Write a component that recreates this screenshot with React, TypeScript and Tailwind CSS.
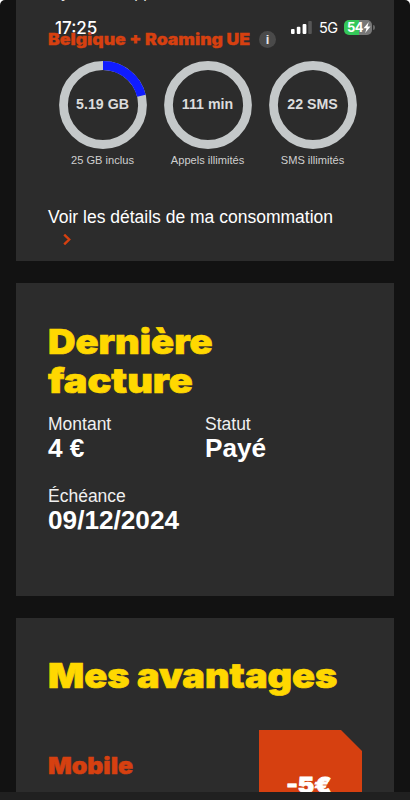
interface IGauge {
	value: string
	label: string
	percent: number
}

const gauges: IGauge[] = [
	{ value: '5.19 GB', label: '25 GB inclus', percent: 21.2 },
	{ value: '111 min', label: 'Appels illimités', percent: 0 },
	{ value: '22 SMS', label: 'SMS illimités', percent: 0 },
]

function Gauge({ value, label, percent }: IGauge) {
	return (
		<div className="flex w-[88px] shrink-0 flex-col items-center">
			<div className="relative flex size-[88px] items-center justify-center">
				<svg className="absolute inset-0 -rotate-90" viewBox="0 0 88 88" fill="none" strokeWidth="8.8">
					<circle cx="44" cy="44" r="39.5" stroke="#c4c8c9" />
					{percent > 0 && (
						<circle
							cx="44"
							cy="44"
							r="39.5"
							stroke="#101cff"
							pathLength="100"
							strokeDasharray={`${percent} 100`}
						/>
					)}
				</svg>
				<span className="relative whitespace-nowrap text-[14.2px] font-bold text-[#dcdcdc]">{value}</span>
			</div>
			<span className="mt-[4px] whitespace-nowrap text-[11.1px] leading-[14px] text-[#cfcfcf]">{label}</span>
		</div>
	)
}

function StatusBar() {
	return (
		<div className="absolute inset-x-0 top-0 h-[44px] text-white">
			<span className="absolute left-[55px] top-[18px] font-['Inter'] text-[17px] leading-[20px] font-medium">
				17:25
			</span>
			<svg className="absolute left-[291px] top-[21px]" width="21" height="13" viewBox="0 0 21 13" fill="#fff">
				<rect x="0" y="8" width="3.6" height="5" rx="1" />
				<rect x="5.8" y="5.8" width="3.6" height="7.2" rx="1" />
				<rect x="11.6" y="3" width="3.8" height="10" rx="1" />
				<rect x="17.2" y="0" width="3.6" height="13" rx="1" fill="#565656" />
			</svg>
			<span className="absolute left-[319px] top-[18px] font-['Inter'] text-[14.5px] leading-[20px] tracking-[-0.5px]">
				5G
			</span>
			<div className="absolute left-[344px] top-[20px] flex h-[15px] w-[28px] items-center overflow-hidden rounded-[5px] bg-[linear-gradient(90deg,#34c759_54%,#777_54%)] pl-[3px]">
				<span className="font-['Inter'] text-[13px] leading-[15px] font-bold tracking-[-0.5px]">54</span>
				<svg width="8" height="11" viewBox="0 0 8 11" fill="#fff">
					<path d="M5.8 0 0.5 6.2h3L2.2 11 7.5 4.6h-3z" />
				</svg>
			</div>
			<div className="absolute left-[373px] top-[25px] h-[5px] w-[1.5px] rounded-r bg-[#666]" />
		</div>
	)
}

function Field({ label, value }: { label: string; value: string }) {
	return (
		<div>
			<p className="text-[17.5px] leading-[22px] text-[#f0f0f0]">{label}</p>
			<p className="pb-[2px] text-[26.2px] leading-[26px] font-bold text-white">{value}</p>
		</div>
	)
}

export default function App() {
	return (
		<div className="h-[800px] w-[410px] bg-white">
			<div className="relative h-[800px] overflow-hidden rounded-t-[5px] bg-[#121212] font-['Liberation_Sans',sans-serif]">
				<StatusBar />
				<main className="flex flex-col gap-[22px] px-[16px]">
					<section className="h-[261px] bg-[#2c2c2c] px-[32px]">
						<p className="-mt-[16px] h-[18px] text-[16px] leading-[18px] whitespace-nowrap text-[#e0e0e0]">
							My Mobile app
						</p>
						<div className="mt-[28px] flex h-[20px] items-center">
							<div className="w-[202px]">
								<h3 className="relative origin-left scale-x-[1.13] whitespace-nowrap font-['Inter'] text-[15.6px] leading-[20px] font-black text-[#d64010] [-webkit-text-stroke:0.3px_#d64010]">
									Belgique + Roaming UE
								</h3>
							</div>
							<span className="-mt-[2px] ml-[9px] flex size-[17px] items-center justify-center rounded-full bg-[#4a4a4a] font-['Liberation_Sans'] text-[13px] leading-[17px] font-bold text-[#e8e8e8]">
								i
							</span>
						</div>
						<div className="mt-[11px] ml-[10.5px] flex gap-[17px]">
							{gauges.map((gauge) => (
								<Gauge key={gauge.label} {...gauge} />
							))}
						</div>
						<p className="mt-[39px] whitespace-nowrap text-[17.5px] leading-[22px] text-white">
							Voir les détails de ma consommation
						</p>
						<svg
							className="ml-[15px] mt-[6px]"
							width="9"
							height="11"
							viewBox="0 0 9 11"
							fill="none"
							stroke="#d64010"
							strokeWidth="2.4"
						>
							<path d="M1.2 0.6l5 4.9-5 4.9" />
						</svg>
					</section>

					<section className="h-[313px] bg-[#2c2c2c] px-[32px] pt-[39px]">
						<h2 className="origin-left scale-x-[1.12] font-['Inter'] text-[34px] leading-[39px] font-black text-[#ffd800] [-webkit-text-stroke:0.7px_#ffd800]">
							Dernière
							<br />
							<span className="inline-block origin-left scale-x-[1.04]">facture</span>
						</h2>
						<div className="mt-[13px] grid grid-cols-2 gap-y-[22px]">
							<Field label="Montant" value="4 €" />
							<Field label="Statut" value="Payé" />
							<Field label="Échéance" value="09/12/2024" />
						</div>
					</section>

					<section className="h-[200px] bg-[#2c2c2c] px-[32px] pt-[38px]">
						<h2 className="origin-left scale-x-[1.115] whitespace-nowrap font-['Inter'] text-[34px] leading-[39px] font-black text-[#ffd800] [-webkit-text-stroke:0.7px_#ffd800]">
							Mes avantages
						</h2>
						<div className="mt-[35px] flex justify-between">
							<h3 className="mt-[22px] origin-left scale-x-[1.1] font-['Inter'] text-[22.6px] leading-[28px] font-black text-[#d64010] [-webkit-text-stroke:0.5px_#d64010]">
								Mobile
							</h3>
							<div className="flex h-[103px] w-[103px] justify-center bg-[#d64010] pt-[42px] [clip-path:polygon(0_0,82px_0,100%_21px,100%_100%,0_100%)]">
								<span className="-ml-[3px] scale-x-[1.14] font-['Inter'] text-[21.5px] leading-[26px] font-black text-white [-webkit-text-stroke:0.8px_white]">
									-5€
								</span>
							</div>
						</div>
					</section>
				</main>
				<div className="absolute inset-x-0 bottom-0 h-[8px] bg-[#202020]" />
			</div>
		</div>
	)
}
